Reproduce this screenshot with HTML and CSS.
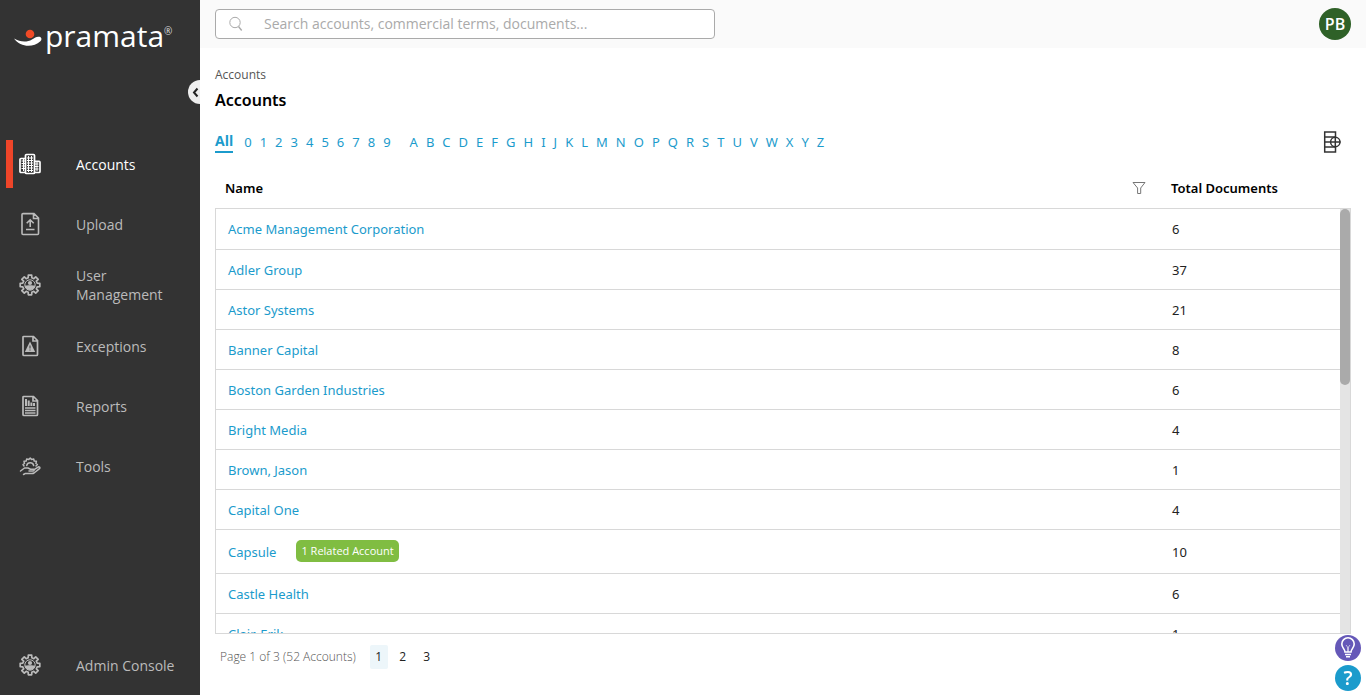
FILE: index.html
```html
<!DOCTYPE html>
<html lang="en">
<head>
<meta charset="utf-8">
<meta name="viewport" content="width=device-width, initial-scale=1">
<title>Accounts</title>
<link rel="stylesheet" href="styles.css">
</head>
<body>
<svg class="sprite" aria-hidden="true">
  <symbol id="gear" viewBox="0 0 24 24">
    <path fill="none" stroke="currentColor" stroke-width="1.7" stroke-linejoin="round" d="M10.2 4.8 10.3 2.2 13.7 2.2 13.8 4.8 15.8 5.7 17.7 3.8 20.2 6.3 18.3 8.2 19.2 10.2 21.8 10.3 21.8 13.7 19.2 13.8 18.3 15.8 20.2 17.7 17.7 20.2 15.8 18.3 13.8 19.2 13.7 21.8 10.3 21.8 10.2 19.2 8.2 18.3 6.3 20.2 3.8 17.7 5.7 15.8 4.8 13.8 2.2 13.7 2.2 10.3 4.8 10.2 5.7 8.2 3.8 6.3 6.3 3.8 8.2 5.7Z"/>
    <circle cx="12" cy="12" r="5.2" fill="none" stroke="currentColor"/>
    <circle cx="12" cy="10" r="2.1" fill="currentColor"/>
    <path fill="currentColor" d="M6.800 12.800c1.400-.8 9-.8 10.400 0a5.300 5.300 0 0 1-10.400 0Z"/>
  </symbol>
</svg>
<div class="app">
  <aside class="sidebar">
    <div class="logo">
      <svg class="logo-mark" viewBox="0 0 28 18" aria-hidden="true"><circle cx="16" cy="5" r="4.3" fill="#f04a26"/><path fill="#fff" d="M0 9.6c6 3.4 13 3.900 18 .8 3-2 5-3.200 7.500-2.600 2.300.6 2.500 3 .9 4.500C19 19 6.500 18.500 0 9.600Z"/></svg>
      <span class="logo-text">pramata</span><span class="logo-reg">®</span>
    </div>
    <button class="collapse" type="button" aria-label="Collapse menu"><svg viewBox="0 0 24 24" aria-hidden="true"><path d="M9.500 8.500 6 12.500l3.500 4" fill="none" stroke="#222" stroke-width="2"/></svg></button>
    <nav class="nav">
      <a class="nav-item active" href="#">
        <svg class="icon" viewBox="0 0 24 24" aria-hidden="true"><g fill="#333" stroke="currentColor" stroke-width="1.700"><rect x="2" y="6.500" width="6" height="14" rx="1"/><rect x="16" y="9.300" width="6" height="11.200" rx="1"/><rect x="7.500" y="2.500" width="9" height="19" rx="1"/></g><g fill="none" stroke="currentColor"><path d="M3.500 9h3.500M3.500 11.500h3.500M3.500 14h3.500M3.500 16.500h3.500M5.500 7v12M17 12h3.500M17 14.500h3.500M17 17h3.500M19 10v9"/><path d="M9 6h6M9 8.500h6M9 11h6M9 13.500h6M9 16h6M9 18.500h6M10.500 4v16M13.500 4v16"/></g></svg>
        <span>Accounts</span></a>
      <a class="nav-item" href="#">
        <svg class="icon" viewBox="0 0 24 24" aria-hidden="true"><g fill="none" stroke="currentColor" stroke-width="1.600"><path d="M5 1.600h11L20.500 6v15.500q0 1-1 1H5q-1 0-1-1v-19q0-1 1-1ZM15.500 2v4.500h5M8 17.500h8.500M12.200 15V8M8.700 11.300 12.200 7.800l3.500 3.500"/></g></svg>
        <span>Upload</span></a>
      <a class="nav-item" href="#">
        <svg class="icon" aria-hidden="true"><use href="#gear"/></svg>
        <span>User Management</span></a>
      <a class="nav-item" href="#">
        <svg class="icon" viewBox="0 0 24 24" aria-hidden="true"><path fill="none" stroke="currentColor" stroke-width="1.700" d="M5.500 2.500h10L19.500 6.500v14q0 1-1 1h-12.500q-1 0-1-1v-17q0-1 .5-1ZM15 3v4h4.500"/><path fill="currentColor" d="m12 7.500 5.200 10.500H6.800Z"/><path stroke="#333" d="M12 11.500v3M12 15.500v1"/></svg>
        <span>Exceptions</span></a>
      <a class="nav-item" href="#">
        <svg class="icon" viewBox="0 0 24 24" aria-hidden="true"><path fill="none" stroke="currentColor" stroke-width="1.700" d="M5.500 2.500h10L19.500 6.500v14q0 1-1 1h-12.500q-1 0-1-1v-17q0-1 .5-1ZM15 3v4h4.500"/><path fill="currentColor" d="M7 5h2v7H7zM9.700 6.500h2V12h-2zM12.400 8.500h2V12h-2zM15 9h2v3h-2z"/><path stroke="currentColor" stroke-width="1.300" d="M7 14h10.500M7 16.500h10.500M7 19h10.500"/></svg>
        <span>Reports</span></a>
      <a class="nav-item" href="#">
        <svg class="icon" viewBox="0 0 24 24" aria-hidden="true"><g fill="none" stroke="currentColor" stroke-width="1.500" stroke-linejoin="round" stroke-linecap="round"><path d="M6 12 5 10.500l1.500-1-.5-2.200 2.200-.3.500-2 2.100.4 1.400-1.300 1.400 1.300 2.100-.4.500 2 2.200.3-.5 2.200 1.500 1L18 12M8.700 11.500a3.600 3.600 0 0 1 7 0"/><path d="M2.500 17 6.500 14H10l2.500 1.200h3q1.500 1.200-.5 1.900h-4M16.500 15.300l4-2.500q1.800 0 1.300 1.500L16 19q-1 .6-3 .4H7.500L5.500 20.500"/></g></svg>
        <span>Tools</span></a>
      <a class="nav-item nav-last" href="#">
        <svg class="icon" aria-hidden="true"><use href="#gear"/></svg>
        <span>Admin Console</span></a>
    </nav>
  </aside>
  <div class="main">
    <header class="topbar">
      <label class="search">
        <svg viewBox="0 0 16 16" aria-hidden="true"><circle cx="7" cy="6.500" r="5.200" fill="none" stroke="#aaa"/><path d="m10.500 10.500 3.200 4" stroke="#aaa" stroke-width="1.400"/></svg>
        <input type="search" aria-label="Search" placeholder="Search accounts, commercial terms, documents...">
      </label>
      <button class="avatar" type="button">PB</button>
    </header>
    <main class="content">
      <a class="crumb" href="#">Accounts</a>
      <h1>Accounts</h1>
      <div class="filter-bar">
        <nav class="letters" aria-label="Filter by first character">
          <a class="all" href="#">All</a>
          <div class="set"><a href="#">0</a><a href="#">1</a><a href="#">2</a><a href="#">3</a><a href="#">4</a><a href="#">5</a><a href="#">6</a><a href="#">7</a><a href="#">8</a><a href="#">9</a></div>
          <div class="set"><a href="#">A</a><a href="#">B</a><a href="#">C</a><a href="#">D</a><a href="#">E</a><a href="#">F</a><a href="#">G</a><a href="#">H</a><a href="#">I</a><a href="#">J</a><a href="#">K</a><a href="#">L</a><a href="#">M</a><a href="#">N</a><a href="#">O</a><a href="#">P</a><a href="#">Q</a><a href="#">R</a><a href="#">S</a><a href="#">T</a><a href="#">U</a><a href="#">V</a><a href="#">W</a><a href="#">X</a><a href="#">Y</a><a href="#">Z</a></div>
        </nav>
        <button class="columns" type="button" aria-label="Choose columns"><svg viewBox="0 0 18 22" aria-hidden="true"><g fill="none" stroke="#333" stroke-width="1.500"><path d="M12.500 6V1H1.700v20h10.800v-5M1 6h11M1 11h16.500M1 16h11"/><circle cx="12.300" cy="11" r="4.700"/><path d="M12.300 6.500v9"/></g></svg></button>
      </div>
      <div class="grid-wrap">
        <table class="grid">
          <thead><tr>
            <th scope="col">Name <button class="filter" type="button" aria-label="Filter by name"><svg viewBox="0 0 14 14" aria-hidden="true"><path d="M1 1.500h12L8.700 7v5.500H5.600V7Z" fill="none" stroke="#777"/></svg></button></th>
            <th scope="col">Total Documents</th>
          </tr></thead>
          <tbody>
            <tr><td><a href="#">Acme Management Corporation</a></td><td>6</td></tr>
            <tr><td><a href="#">Adler Group</a></td><td>37</td></tr>
            <tr><td><a href="#">Astor Systems</a></td><td>21</td></tr>
            <tr><td><a href="#">Banner Capital</a></td><td>8</td></tr>
            <tr><td><a href="#">Boston Garden Industries</a></td><td>6</td></tr>
            <tr><td><a href="#">Bright Media</a></td><td>4</td></tr>
            <tr><td><a href="#">Brown, Jason</a></td><td>1</td></tr>
            <tr><td><a href="#">Capital One</a></td><td>4</td></tr>
            <tr><td><a href="#">Capsule</a><button class="badge" type="button">1 Related Account</button></td><td>10</td></tr>
            <tr><td><a href="#">Castle Health</a></td><td>6</td></tr>
            <tr><td><a href="#">Clair, Erik</a></td><td>1</td></tr>
          </tbody>
        </table>
        <div class="track"><div class="thumb"></div></div>
      </div>
      <nav class="pager" aria-label="Pages">
        <span class="summary">Page 1 of 3 (52 Accounts)</span>
        <div class="pages"><a class="current" href="#">1</a><a href="#">2</a><a href="#">3</a></div>
      </nav>
    </main>
  </div>
  <div class="helpers">
    <button class="tips" type="button" aria-label="Tips"><svg viewBox="0 0 26 26" aria-hidden="true"><g fill="none" stroke="#fff" stroke-width="1.600"><path d="M10 17c0-3-3.200-4-3.200-8a6.200 6.200 0 0 1 12.400 0c0 4-3.200 5-3.200 8ZM10 19.500h6M11 21.800h4"/><path stroke-width=".6" d="M11 10l1.500 2v5M15 10l-1.500 2v5"/></g></svg></button>
    <button class="help" type="button" aria-label="Help">?</button>
  </div>
</div>
</body>
</html>
```
FILE: styles.css
```css
* { box-sizing: border-box; }
body { margin: 0; font: 14px/20px "Open Sans", "Noto Sans", sans-serif; color: #222; background: #fff; }
a { color: inherit; text-decoration: none; }
button { border: 0; padding: 0; background: none; font: inherit; color: inherit; cursor: pointer; }
svg { display: block; }
.sprite { display: none; }
.app { display: flex; height: 100vh; }

.sidebar { position: relative; display: flex; flex-direction: column; flex: 0 0 200px; overflow: hidden; background: #333; color: #bbb; }
.logo { display: flex; height: 140px; padding: 14px 0 0 14px; color: #fff; }
.logo-mark { width: 28px; height: 18px; margin-top: 15px; }
.logo-text { margin-left: 3px; font-size: 30px; line-height: 44px; font-weight: 400; }
.logo-reg { margin-top: 7px; font-size: 10px; line-height: 20px; color: #ddd; }
.collapse { position: absolute; top: 80px; right: -12px; width: 24px; height: 24px; border-radius: 50%; background: #eee; }
.nav { display: flex; flex: 1; flex-direction: column; gap: 12px; padding: 0 12px 6px 6px; }
.nav-item { display: grid; grid-template-columns: 24px 1fr; column-gap: 34px; align-items: center; min-height: 48px; padding: 6px 0 6px 12px; line-height: 19px; }
.nav-item.active { padding-left: 12px; border-radius: 0 4px 4px 0; background: linear-gradient(#ee4529, #ee4529) left / 7px 100% no-repeat; color: #fff; }
.nav-last { margin-top: auto; }
.icon { width: 24px; height: 24px; }

.main { display: flex; flex: 1; flex-direction: column; min-width: 0; }
.topbar { display: flex; align-items: center; justify-content: space-between; height: 48px; padding: 0 15px; background: #fafafa; }
.search { display: flex; align-items: center; width: 500px; height: 30px; padding: 0 12px; border: 1px solid #aaa; border-radius: 4px; background: #fff; }
.search svg { flex: none; width: 16px; height: 16px; }
.search input { flex: 1; min-width: 0; margin-left: 20px; padding: 0; border: 0; outline: 0; background: none; font: inherit; }
.search input::placeholder { color: #aaa; }
.avatar { width: 32px; height: 32px; border-radius: 50%; background: #2f6128; color: #fff; font-size: 16px; font-weight: 600; }

.content { display: flex; flex: 1; flex-direction: column; min-height: 0; padding: 17px 15px 26px; }
.crumb { font-size: 12px; color: #555; }
h1 { margin: 4px 0 0; font-family: "Noto Sans", sans-serif; font-size: 16px; line-height: 22px; font-weight: 600; color: #000; }
.filter-bar { display: flex; align-items: center; justify-content: space-between; height: 44px; margin-top: 9px; padding-right: 10px; }
.letters { display: flex; align-items: center; color: #1b9bcc; }
.all { border-bottom: 2px solid; font-weight: 700; margin-right: 11px; }
.set { display: flex; gap: 8px; margin-right: 19px; font-family: "Noto Sans", sans-serif; font-size: 13px; }
.columns svg { width: 18px; height: 22px; }

.grid-wrap { position: relative; display: flex; flex: 1; min-height: 0; }
.grid { display: flex; flex: 1; flex-direction: column; min-width: 0; font-family: "Noto Sans", sans-serif; font-size: 13px; }
thead, tbody { display: block; }
.grid tr { display: grid; grid-template-columns: 1fr 180px; align-items: center; }
.grid th { display: flex; align-items: center; justify-content: space-between; padding: 0 4px 0 0; font-weight: 600; color: #000; text-align: left; }
.grid th:last-child { padding-left: 11px; }
thead { height: 44px; padding: 0 11px 0 10px; }
thead tr { height: 48px; }
.filter svg { width: 14px; height: 14px; margin-right: 10px; }
tbody { flex: 1; min-height: 0; overflow-y: auto; scrollbar-width: none; padding-right: 10px; border: 1px solid #d8d8d8; }
tbody tr { min-height: 40px; border-bottom: 1px solid #d8d8d8; }
tbody tr:first-child { min-height: 41px; }
.grid td { display: flex; align-items: center; padding: 0 12px; }
td a { color: #1b9bcc; }
.badge { height: 22px; margin: 10px 0 11px 20px; padding: 0 5px; border-radius: 5px; background: #80bd42; color: #fff; font-family: "Open Sans", sans-serif; font-size: 11px; line-height: 22px; }
.track { position: absolute; top: 45px; right: 1px; bottom: 1px; width: 10px; background: #e4e4e4; }
.thumb { height: 176px; border-radius: 5px; background: #aaa; }
.pager { display: flex; align-items: center; gap: 14px; height: 24px; margin-top: 11px; padding-left: 5px; font-size: 12px; color: #888; }
.summary { font-weight: 300; color: #555; }
.pages { display: flex; gap: 6px; color: #222; }
.pages a { width: 18px; line-height: 24px; border-radius: 2px; text-align: center; }
.pages .current { background: #edf6fa; }

.helpers { position: fixed; right: 5px; bottom: 4px; display: grid; gap: 4px; }
.helpers button { width: 26px; height: 26px; border-radius: 50%; color: #fff; }
.tips { background: #6558b8; }
.help { background: #1b9bcc; font-size: 20px; font-weight: 600; line-height: 26px; }
```
